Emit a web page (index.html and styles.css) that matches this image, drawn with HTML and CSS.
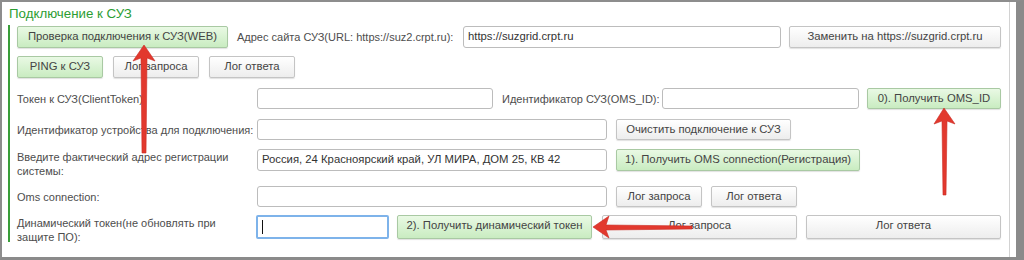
FILE: index.html
```html
<!DOCTYPE html>
<html lang="ru">
<head>
  <meta charset="UTF-8" />
  <title>Подключение к СУЗ</title>
  <link rel="stylesheet" href="styles.css">
</head>
<body>
  <div class="window">
    <div class="content">
      <div class="group-title">Подключение к СУЗ</div>

      <div class="group-body">
        <div class="row r1">
          <div class="btn green w-check">Проверка подключения к СУЗ(WEB)</div>
          <div class="label url-label">Адрес сайта СУЗ(URL: https://suz2.crpt.ru):</div>
          <div class="field w-url">https://suzgrid.crpt.ru</div>
          <div class="btn w-replace">Заменить на https://suzgrid.crpt.ru</div>
        </div>

        <div class="row r2">
          <div class="btn green w-small">PING к СУЗ</div>
          <div class="btn w-small">Лог запроса</div>
          <div class="btn w-small">Лог ответа</div>
        </div>

        <div class="row r3">
          <div class="label cap">Токен к СУЗ(ClientToken)</div>
          <div class="field w-token"></div>
          <div class="label oms-label">Идентификатор СУЗ(OMS_ID):</div>
          <div class="field w-oms"></div>
          <div class="btn green w-getoms">0). Получить OMS_ID</div>
        </div>

        <div class="row r4">
          <div class="label cap">Идентификатор устройства для подключения:</div>
          <div class="field w-wide"></div>
          <div class="btn w-clear">Очистить подключение к СУЗ</div>
        </div>

        <div class="row r5">
          <div class="label cap two">Введите фактический адрес регистрации системы:</div>
          <div class="field w-wide">Россия, 24 Красноярский край, УЛ МИРА, ДОМ 25, КВ 42</div>
          <div class="btn green w-conn">1). Получить OMS connection(Регистрация)</div>
        </div>

        <div class="row r6">
          <div class="label cap">Oms connection:</div>
          <div class="field w-wide"></div>
          <div class="btn w-small">Лог запроса</div>
          <div class="btn w-small">Лог ответа</div>
        </div>

        <div class="row r7">
          <div class="label cap two">Динамический токен(не обновлять при защите ПО):</div>
          <div class="field focused w-dyn"><span class="caret"></span></div>
          <div class="btn green w-big">2). Получить динамический токен</div>
          <div class="btn w-big">Лог запроса</div>
          <div class="btn w-big">Лог ответа</div>
        </div>
      </div>
    </div>

    <!-- стрелки поверх формы -->
    <svg class="arrows" width="1024" height="260" viewBox="0 0 1024 260">
      <polygon points="144,45 133,61 141,58 142,153 146,153 147,58 155,61" />
      <polygon points="944,108 934,124 942,121 943,195 946,195 947,121 955,124" />
      <polygon points="593,227 609,216 606,225 692,226 692,229 606,230 609,238" />
    </svg>
  </div>
</body>
</html>
```

FILE: styles.css
```css
body {
  margin: 0;
  background: #fff;
  font-family: "Liberation Sans", Arial, sans-serif;
  font-size: 11.3px;
  color: #4d4d4d;
}

.window {
  position: relative;
  width: 1024px;
  height: 260px;
  box-sizing: border-box;
  border-top: 2px solid #8d8d8d;
  border-left: 2px solid #8d8d8d;
  border-right: 8px solid #8a8a8a;
  border-bottom: 3px solid #8a8a8a;
  padding-right: 6px;
  background: #fff;
}

.content {
  height: 100%;
  border-right: 1px solid #d2d2d2;
  box-sizing: border-box;
}

.group-title {
  padding: 4px 0 0 7px;
  height: 17px;
  font-size: 13.3px;
  line-height: 16px;
  color: #2c9d33;
}

.group-body {
  margin: 2px 0 0 6px;
  padding: 1px 0 0 7px;
  border-left: 2px solid #3a9e3a;
  height: 217px;
  box-sizing: border-box;
}

.row {
  display: flex;
  align-items: center;
  height: 22px;
}
.r2 { margin-top: 8px; }
.r3 { margin-top: 10px; height: 21px; }
.r4 { margin-top: 10px; height: 21px; }
.r5 { margin-top: 9px; }
.r6 { margin-top: 15px; height: 21px; }
.r7 { margin-top: 8px; height: 24px; }

.label {
  white-space: nowrap;
  font-size: 11px;
  line-height: 14px;
  flex: none;
}
.label.cap {
  width: 240px;
}
.label.two {
  white-space: normal;
  align-self: flex-start;
  width: 225px;
  margin-right: 15px;
  padding-top: 1px;
}
.url-label { width: 226px; margin-left: 9px; }
.oms-label { width: 160px; margin-left: 9px; }

.field {
  height: 100%;
  box-sizing: border-box;
  border: 1px solid #bcbcbc;
  border-radius: 3px;
  background: #fff;
  padding: 0 4px;
  line-height: 19px;
  color: #333;
  white-space: nowrap;
  overflow: hidden;
  flex: none;
}
.field.focused {
  border: 2px solid #7eb3ea;
  border-radius: 2px;
  padding-left: 4px;
  display: flex;
  align-items: center;
}
.caret {
  width: 1px;
  height: 14px;
  background: #111;
}

.btn {
  height: 100%;
  box-sizing: border-box;
  border: 1px solid #c4c4c4;
  border-radius: 2px;
  background: linear-gradient(to bottom, #ffffff, #ededed);
  box-shadow: 0 1px 1px rgba(0, 0, 0, 0.12);
  text-align: center;
  line-height: 19px;
  color: #444;
  white-space: nowrap;
  flex: none;
}
.btn.green {
  border-color: #a9c9a3;
  background: linear-gradient(to bottom, #e9f9e4, #c9ecc1);
}

.row .btn + .btn { margin-left: 10px; }
.row .field + .btn { margin-left: 8px; }
.r4 .field + .btn,
.r5 .field + .btn,
.r6 .field + .btn { margin-left: 9px; }
.r6 .btn + .btn { margin-left: 9px; }
.r7 .btn + .btn + .btn { margin-left: 9px; }

.w-check { width: 211px; }
.w-url { width: 318px; }
.w-replace { width: 212px; }
.w-small { width: 86px; }
.w-token { width: 236px; }
.w-oms { width: 197px; }
.w-getoms { width: 134px; }
.w-wide { width: 350px; }
.w-clear { width: 175px; }
.w-conn { width: 244px; }
.w-dyn { width: 133px; margin-left: -1px; }
.w-big { width: 195px; }

.arrows {
  position: absolute;
  top: -2px;
  left: -2px;
  pointer-events: none;
}
.arrows polygon {
  fill: #e2392e;
  stroke: #c92a22;
  stroke-width: 0.6;
  stroke-linejoin: round;
}
```
